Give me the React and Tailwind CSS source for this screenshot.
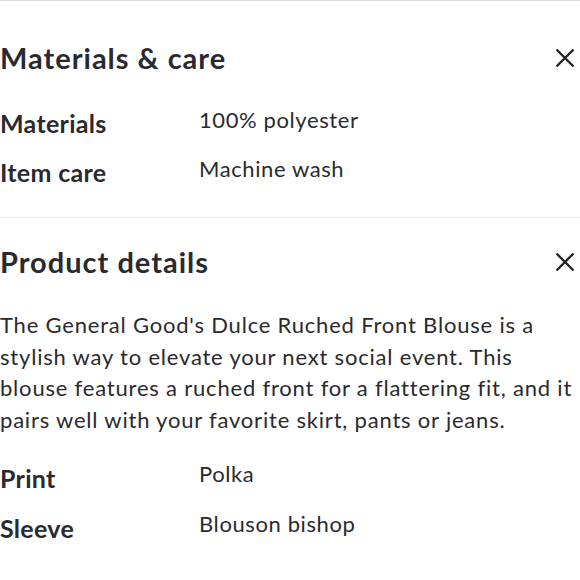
import React from "react";

function CloseIcon() {
  return (
    <svg width="20" height="20" viewBox="0 0 20 20" className="shrink-0 text-[#232326]">
      <path d="M1.5 1.5 L18.5 18.5 M18.5 1.5 L1.5 18.5" stroke="currentColor" strokeWidth="2.4" strokeLinecap="butt" fill="none" />
    </svg>
  );
}

function Row({ label, value, h }) {
  return (
    <div className="flex items-start">
      <div className={`w-[199px] shrink-0 text-[25px] tracking-[0.3px] font-bold ${h === 50 ? "leading-[50px]" : "leading-[49px]"}`}>{label}</div>
      <div className="text-[22px] leading-[42px] tracking-[0.6px]">{value}</div>
    </div>
  );
}

export default function App() {
  return (
    <div className="w-[580px] h-[580px] overflow-hidden bg-white text-[#2a2a2e] font-['Lato',sans-serif] border-t border-[#dcdcdc]">
      <section className="pt-[39px] pb-[20px] border-b border-[#ececec]">
        <div className="flex items-center justify-between h-[36px] pr-[5px]">
          <h2 className="text-[29px] leading-[36px] font-bold tracking-[1px]">Materials &amp; care</h2>
          <CloseIcon />
        </div>
        <div className="mt-[23px]">
          <Row label="Materials" value="100% polyester" />
          <Row label="Item care" value="Machine wash" />
        </div>
      </section>
      <section className="pt-[26px]">
        <div className="flex items-center justify-between h-[36px] pr-[5px]">
          <h2 className="text-[29px] leading-[36px] font-bold tracking-[1px]">Product details</h2>
          <CloseIcon />
        </div>
        <p className="mt-[29px] text-[22px] leading-[31.5px] tracking-[0.8px] whitespace-nowrap">
          <span className="block">The General Good's Dulce Ruched Front Blouse is a</span>
          <span className="block">stylish way to elevate your next social event. This</span>
          <span className="block">blouse features a ruched front for a flattering fit, and it</span>
          <span className="block">pairs well with your favorite skirt, pants or jeans.</span>
        </p>
        <div className="mt-[18px]">
          <Row label="Print" value="Polka" h={50} />
          <Row label="Sleeve" value="Blouson bishop" h={50} />
        </div>
      </section>
    </div>
  );
}
